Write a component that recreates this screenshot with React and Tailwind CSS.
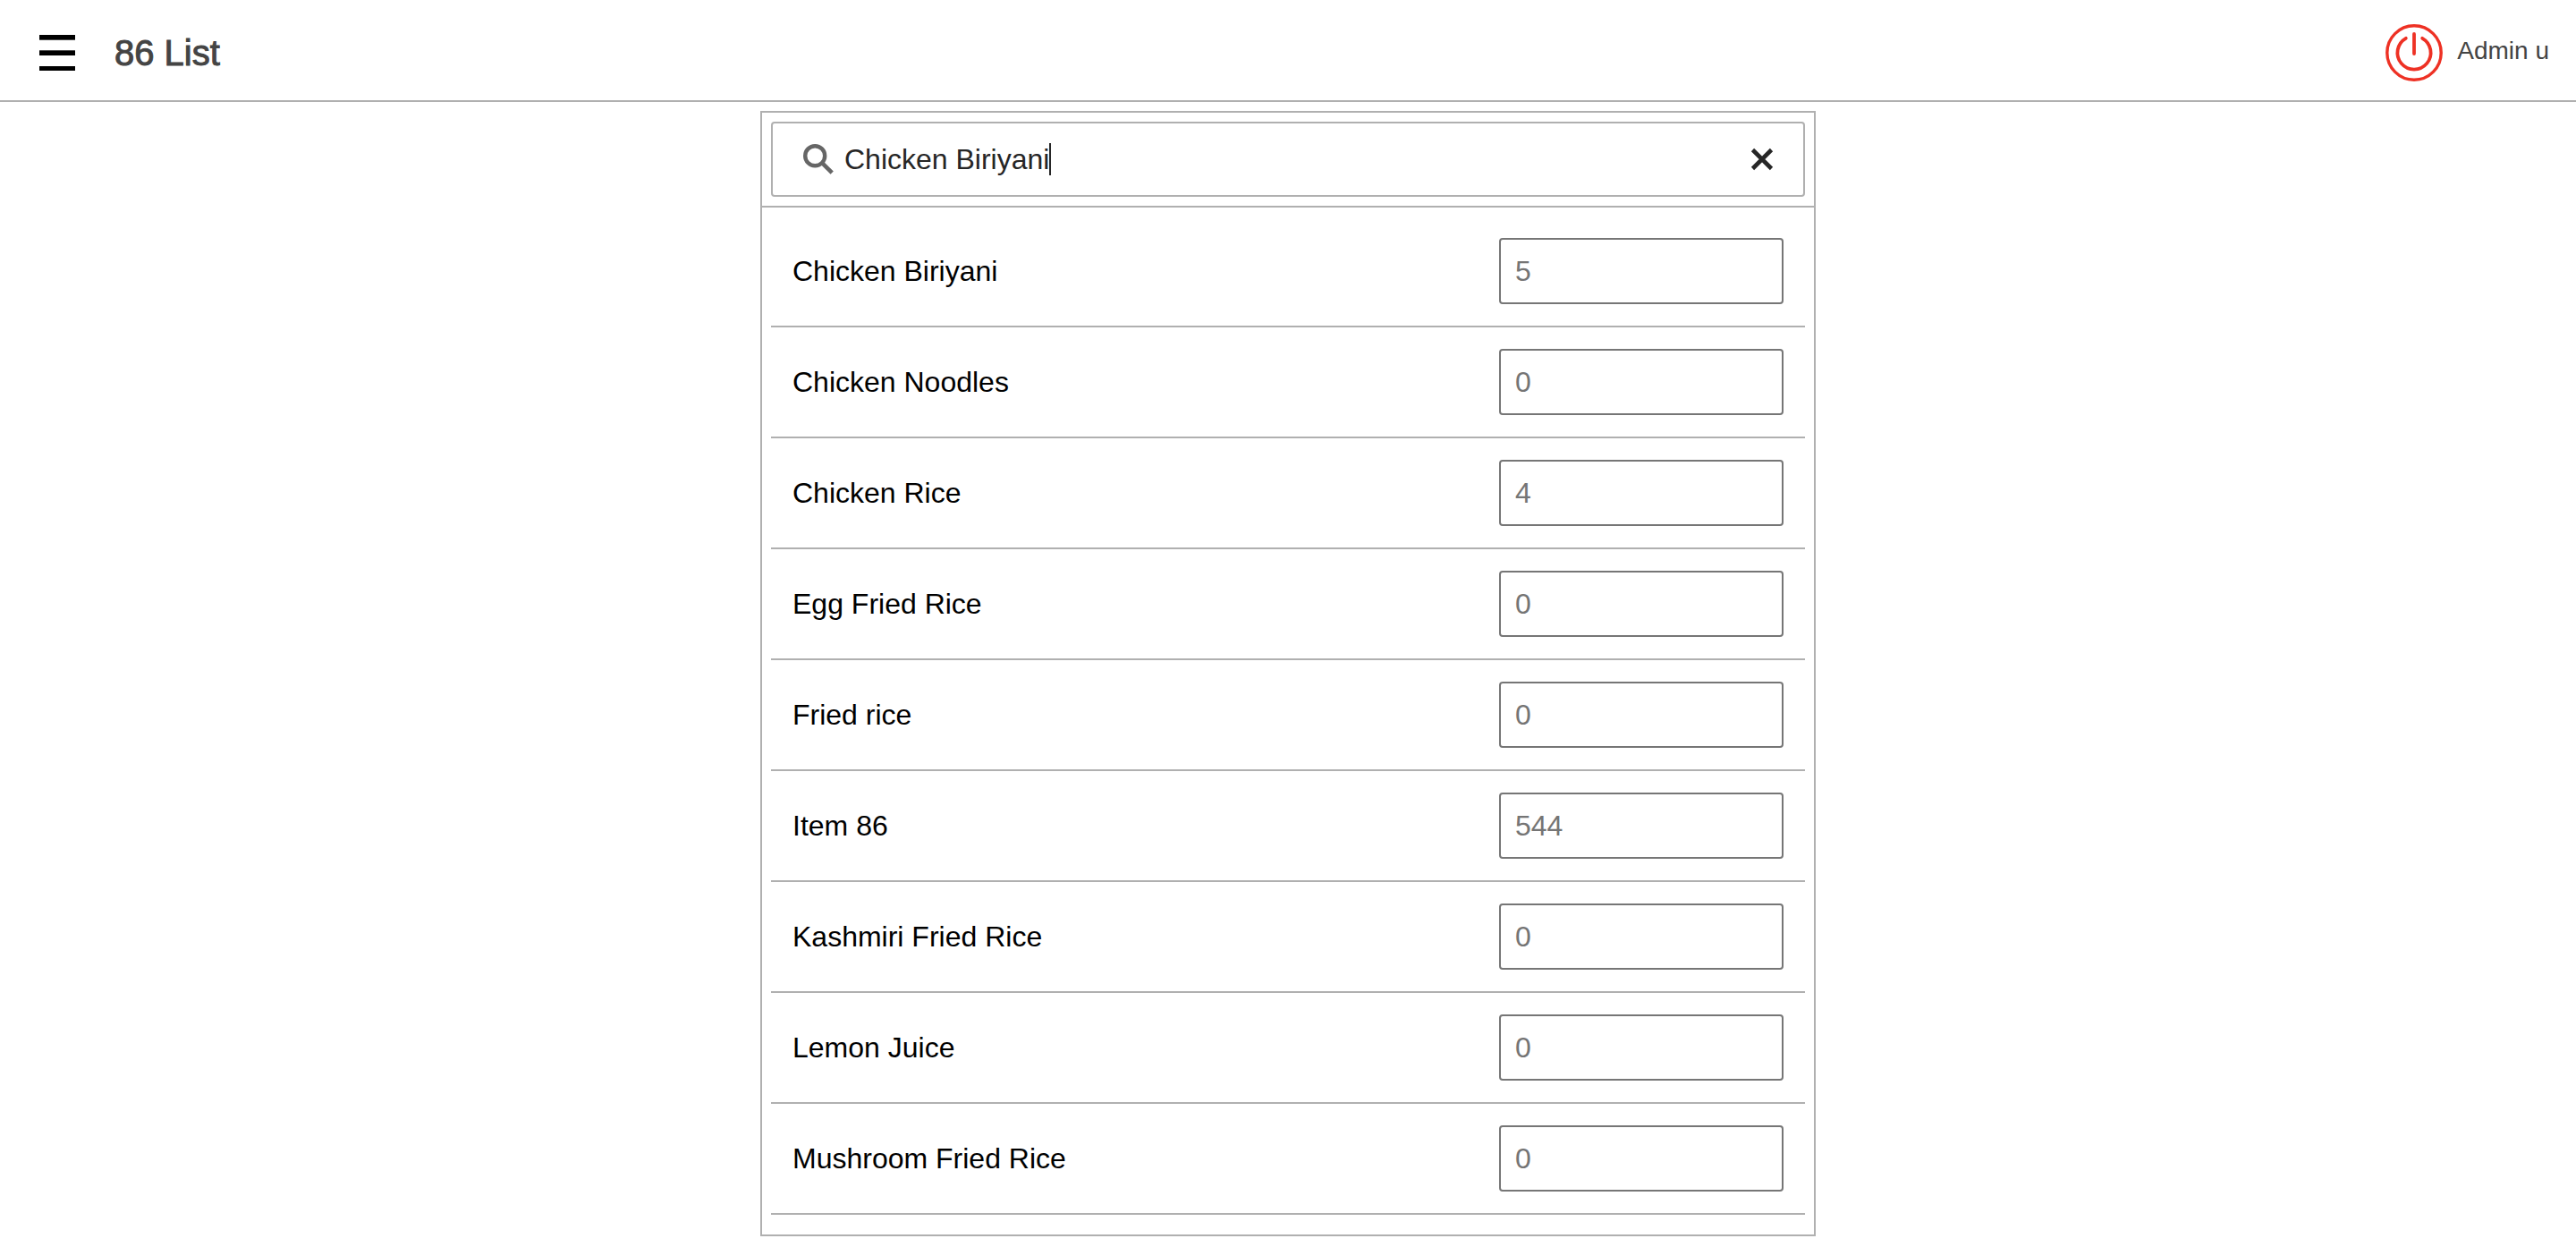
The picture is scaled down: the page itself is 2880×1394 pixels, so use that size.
import { useState } from "react";

const ITEMS = [
  { name: "Chicken Biriyani", quantity: "5" },
  { name: "Chicken Noodles", quantity: "0" },
  { name: "Chicken Rice", quantity: "4" },
  { name: "Egg Fried Rice", quantity: "0" },
  { name: "Fried rice", quantity: "0" },
  { name: "Item 86", quantity: "544" },
  { name: "Kashmiri Fried Rice", quantity: "0" },
  { name: "Lemon Juice", quantity: "0" },
  { name: "Mushroom Fried Rice", quantity: "0" },
];

function MenuIcon() {
  return (
    <svg viewBox="0 0 40 40" className="size-10" fill="black" aria-hidden="true">
      <rect y="0" width="40" height="5.7" />
      <rect y="17.3" width="40" height="5.7" />
      <rect y="35" width="40" height="5" />
    </svg>
  );
}

function PowerIcon() {
  return (
    <svg
      viewBox="0 0 64 64"
      className="size-16"
      fill="none"
      stroke="#ee3124"
      strokeWidth="3.8"
      strokeLinecap="round"
      aria-hidden="true"
    >
      <circle cx="32" cy="32" r="30.2" strokeWidth="3.4" />
      <path d="M22.8 15.8a18.6 18.6 0 1 0 18.4 0" />
      <path d="M32 11v22" />
    </svg>
  );
}

function SearchIcon() {
  return (
    <svg viewBox="0 0 34 34" className="size-[34px]" fill="none" stroke="#666666" aria-hidden="true">
      <circle cx="13.2" cy="13.2" r="11" strokeWidth="4.4" />
      <path d="M20.6 20.6L32.2 32.2" strokeWidth="4.6" />
    </svg>
  );
}

function CloseIcon() {
  return (
    <svg viewBox="0 0 28 28" className="size-7" fill="none" stroke="#262626" strokeWidth="4.6" aria-hidden="true">
      <path d="M3.5 3.5l21 21M24.5 3.5l-21 21" />
    </svg>
  );
}

function Header() {
  return (
    <header className="flex h-[114px] items-center border-b-2 border-[#b0b0b0] pt-1.5 pr-[30px] pl-11">
      <button type="button" aria-label="Open menu">
        <MenuIcon />
      </button>
      <h1 className="pl-11 text-[40px] leading-[48px] text-[#444444] [-webkit-text-stroke:1px_#444444]">86 List</h1>
      <div className="ml-auto flex items-center gap-4">
        <button type="button" aria-label="Log out">
          <PowerIcon />
        </button>
        <span className="pb-1 text-[28px] leading-8 text-[#444444]">Admin u</span>
      </div>
    </header>
  );
}

function SearchBar() {
  const [query, setQuery] = useState("Chicken Biriyani");
  return (
    <div className="border-b-2 border-[#b0b0b0] p-2.5">
      <div className="flex h-[84px] items-center rounded-sm border-2 border-[#b0b0b0] pr-8 pl-[34px]">
        <SearchIcon />
        <div className="flex flex-1 items-center pl-3">
          <input
            type="text"
            aria-label="Search items"
            value={query}
            onChange={(e) => setQuery(e.target.value)}
            className="field-sizing-content text-[32px] leading-10 text-[#262626] caret-transparent outline-none"
          />
          <span className="h-9 w-0.5 bg-[#262626]" aria-hidden="true" />
        </div>
        <button type="button" aria-label="Clear search" onClick={() => setQuery("")}>
          <CloseIcon />
        </button>
      </div>
    </div>
  );
}

function ItemRow({ id, name, quantity }) {
  return (
    <li className="flex items-center justify-between border-b-2 border-[#b0b0b0] p-6">
      <label htmlFor={id} className="text-[32px] leading-10 text-black">
        {name}
      </label>
      <input
        id={id}
        type="text"
        inputMode="numeric"
        placeholder={quantity}
        className="h-[74px] w-[318px] rounded-sm border-2 border-[#767676] px-4 text-[32px] leading-10 placeholder:text-[#757575]"
      />
    </li>
  );
}

export default function App() {
  return (
    <div className="min-h-screen bg-white font-['Liberation_Sans',Arial,sans-serif]">
      <Header />
      <main className="mx-auto mt-2.5 w-full max-w-[1180px] border-2 border-[#b0b0b0]">
        <SearchBar />
        <ul className="px-2.5 pt-2.5 pb-[22px]">
          {ITEMS.map((item, i) => (
            <ItemRow key={item.name} id={`item-${i}`} {...item} />
          ))}
        </ul>
      </main>
    </div>
  );
}
